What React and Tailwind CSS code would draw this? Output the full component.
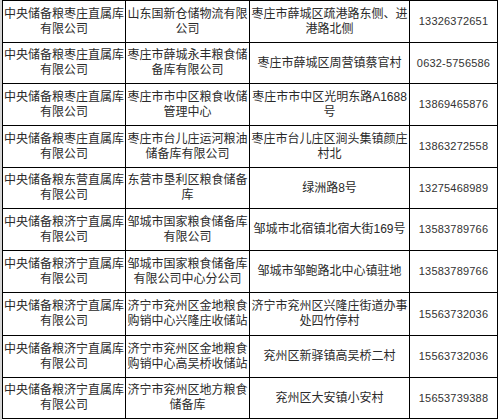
const rows = [
  ["中央储备粮枣庄直属库有限公司", "山东国新仓储物流有限公司", "枣庄市薛城区疏港路东侧、进港路北侧", "13326372651", "h-[42px]"],
  ["中央储备粮枣庄直属库有限公司", "枣庄市薛城永丰粮食储备库有限公司", "枣庄市薛城区周营镇蔡官村", "0632-5756586", "h-[41px]"],
  ["中央储备粮枣庄直属库有限公司", "枣庄市市中区粮食收储管理中心", "枣庄市市中区光明东路A1688号", "13869465876", "h-[42px]"],
  ["中央储备粮枣庄直属库有限公司", "枣庄市台儿庄运河粮油储备库有限公司", "枣庄市台儿庄区涧头集镇颜庄村北", "13863272558", "h-[42px]"],
  ["中央储备粮东营直属库有限公司", "东营市垦利区粮食储备库", "绿洲路8号", "13275468989", "h-[41px]"],
  ["中央储备粮济宁直属库有限公司", "邹城市国家粮食储备库有限公司", "邹城市北宿镇北宿大街169号", "13583789766", "h-[42px]"],
  ["中央储备粮济宁直属库有限公司", "邹城市国家粮食储备库有限公司中心分公司", "邹城市邹鲍路北中心镇驻地", "13583789766", "h-[42px]"],
  ["中央储备粮济宁直属库有限公司", "济宁市兖州区金地粮食购销中心兴隆庄收储站", "济宁市兖州区兴隆庄街道办事处四竹停村", "15563732036", "h-[43px]"],
  ["中央储备粮济宁直属库有限公司", "济宁市兖州区金地粮食购销中心高吴桥收储站", "兖州区新驿镇高吴桥二村", "15563732036", "h-[42px]"],
  ["中央储备粮济宁直属库有限公司", "济宁市兖州区地方粮食储备库", "兖州区大安镇小安村", "15653739388", "h-[41px]"],
];

const base =
  "flex items-center justify-center text-center border-r border-b border-black overflow-hidden";
const cell = `${base} text-[12px] leading-[15px] text-[#2a2a2a]`;
const phone = `${base} text-[11px] tracking-[0.2px] text-[#333]`;

export default function App() {
  return (
    <div
      className="w-[499px] h-[420px] bg-white flex overflow-hidden"
      style={{ fontFamily: '"Liberation Sans", "Noto Sans CJK SC", sans-serif' }}
    >
      <div className="w-[2px] h-full bg-[#d6d6d6]" />
      <div className="w-[496px] border-l border-t border-black self-start">
        {rows.map((r, i) => (
          <div key={i} className={`grid grid-cols-[123px_124px_160px_88px] ${r[4]}`}>
            <div className={cell}>{r[0]}</div>
            <div className={cell}>{r[1]}</div>
            <div className={cell}>{r[2]}</div>
            <div className={phone}>{r[3]}</div>
          </div>
        ))}
      </div>
    </div>
  );
}
